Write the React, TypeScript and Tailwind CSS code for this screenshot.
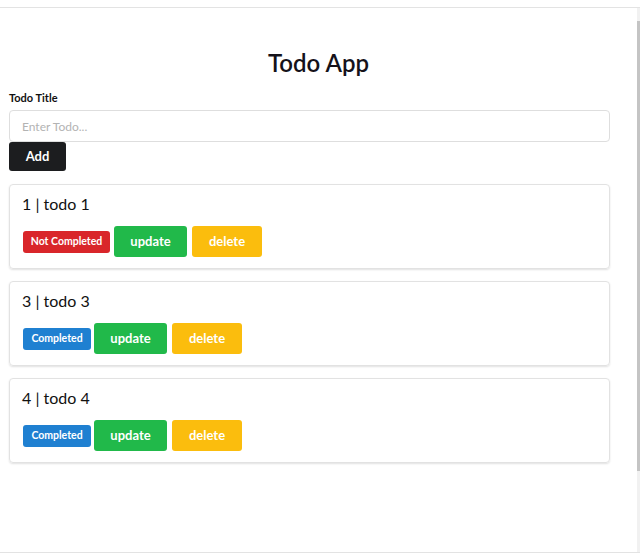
import React from "react";

const todos = [
  { id: 1, title: "todo 1", completed: false },
  { id: 3, title: "todo 3", completed: true },
  { id: 4, title: "todo 4", completed: true },
];

export default function App() {
  return (
    <div className="w-[640px] h-[558px] bg-white pt-[7px] overflow-hidden" style={{ fontFamily: "Lato, 'Open Sans', sans-serif" }}>
      <div className="h-[546px] border-t border-b border-[#e3e3e3] flex">
        <div className="flex-1 px-[9px] text-[#111]">
          <h1 className="mt-[40px] text-center text-[24px] leading-[30px] font-semibold text-[#15121a]">Todo App</h1>
          <div className="mt-[13px] text-[11px] leading-[14px] font-bold">Todo Title</div>
          <input
            className="mt-[5px] block w-[601px] h-[32px] border border-[#dedede] rounded-[4px] px-[12px] text-[12px] placeholder:text-[#b3b3b3] outline-none"
            placeholder="Enter Todo..."
          />
          <button className="block w-[57px] h-[29px] bg-[#1c1d1f] rounded-[3px] text-white text-[13px] font-bold">Add</button>
          <div className="mt-[13px] flex flex-col gap-[12px] w-[601px]">
            {todos.map((t) => (
              <div key={t.id} className="border border-[#e2e2e2] rounded-[4px] shadow-[0_1px_2px_rgba(0,0,0,0.12)] pl-[12px] pt-[7px] pb-[11px]">
                <div className="text-[16px] leading-[24px] text-[#111]">
                  {t.id} | {t.title}
                </div>
                <div className="mt-[10px] flex items-center h-[31px]">
                  {t.completed ? (
                    <span className="ml-[1px] w-[68px] h-[22px] flex items-center justify-center rounded-[3px] bg-[#1f80d1] text-white text-[10.5px] font-bold">Completed</span>
                  ) : (
                    <span className="ml-[1px] w-[87px] h-[22px] flex items-center justify-center rounded-[3px] bg-[#d9262a] text-white text-[10.5px] font-bold">Not Completed</span>
                  )}
                  <button className={`${t.completed ? "ml-[3px]" : "ml-[4px]"} w-[73px] h-[31px] rounded-[3px] bg-[#21b94a] text-white text-[13px] font-bold`}>update</button>
                  <button className="ml-[5px] w-[70px] h-[31px] rounded-[3px] bg-[#fbbd0d] text-white text-[13px] font-bold">delete</button>
                </div>
              </div>
            ))}
          </div>
        </div>
        <div className="w-[3px] flex flex-col bg-[#f1f1f1]">
          <div className="h-[13px]" />
          <div className="h-[450px] bg-[#c4c4c4]" />
        </div>
      </div>
    </div>
  );
}
